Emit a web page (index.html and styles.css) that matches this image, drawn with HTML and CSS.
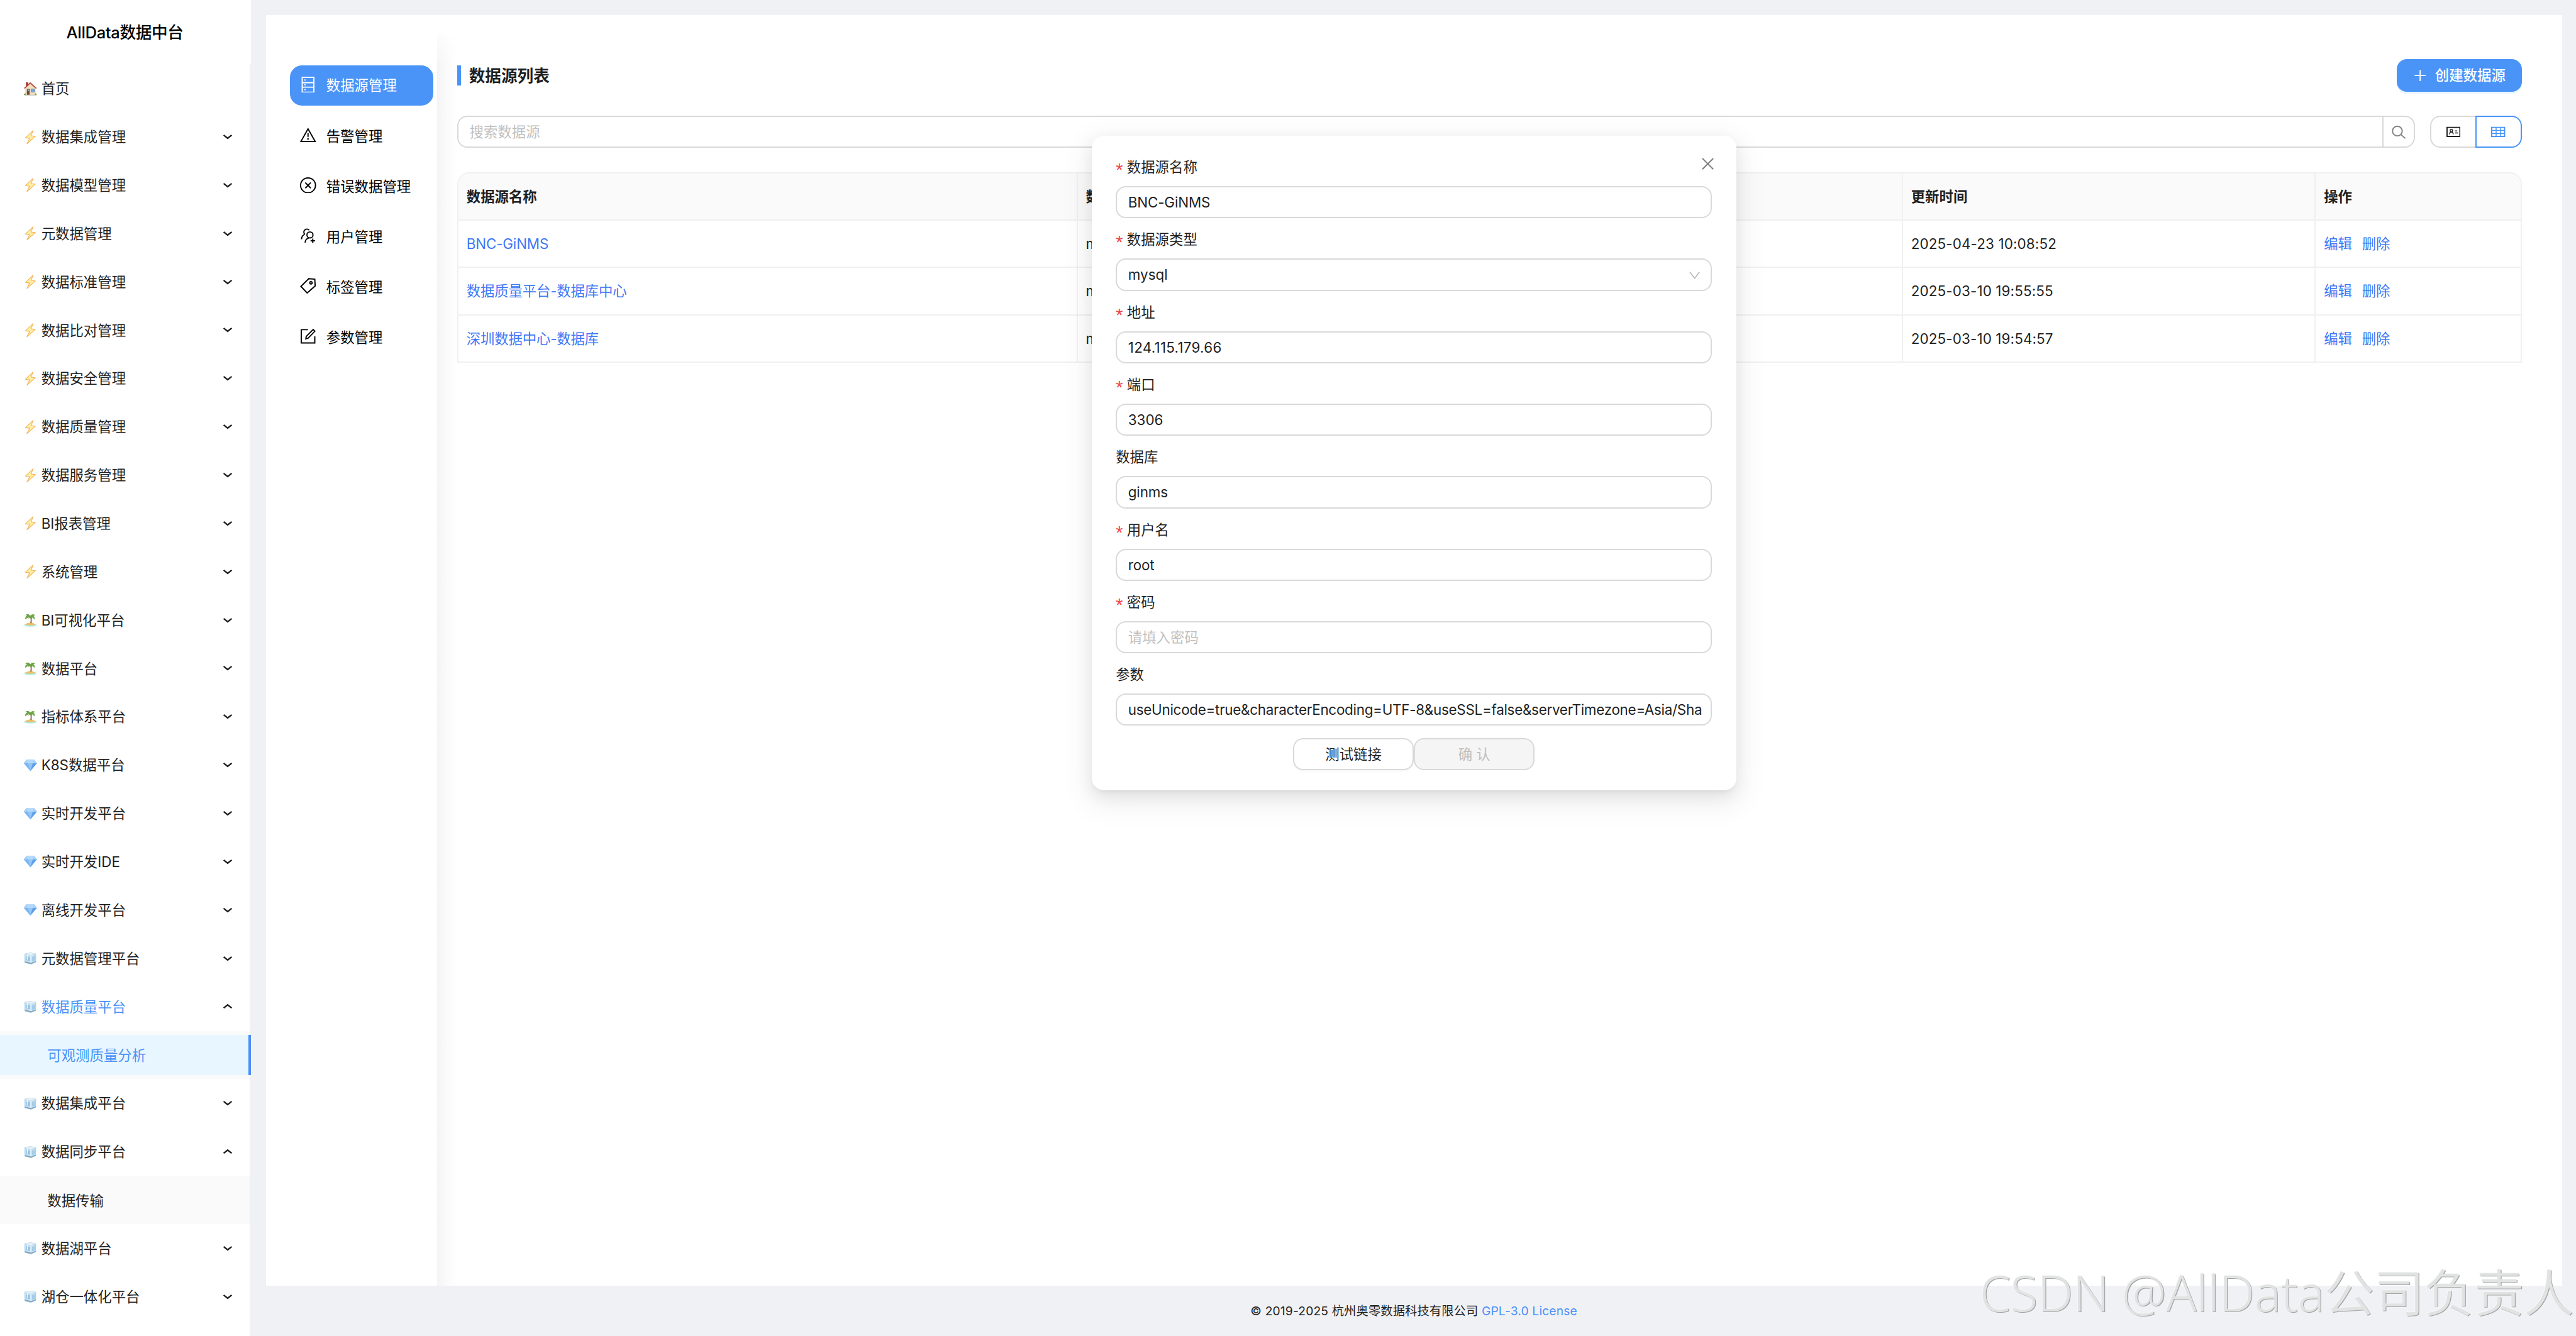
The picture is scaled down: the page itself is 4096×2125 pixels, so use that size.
FILE: index.html
```html
<!DOCTYPE html>
<html lang="zh-CN">
<head>
<meta charset="utf-8">
<title>AllData数据中台</title>
<link rel="stylesheet" href="styles.css">
</head>
<body>
<svg class="defs" width="0" height="0" aria-hidden="true">
  <symbol id="house" viewBox="0 0 14 14">
    <rect x="2.6" y=".6" width="2.4" height="4" fill="#9c4038"/>
    <path d="M7 1.6 12.2 6.6V13H1.8V6.6Z" fill="#f0dfc2"/>
    <path d="M7 .5 13.3 6.3 12.6 7 7 2.1 1.4 7 .7 6.3Z" fill="#b9453b"/>
    <rect x="3.6" y="7.2" width="2.7" height="5.8" fill="#6e4636"/><rect x="4.3" y="7.8" width="1.3" height="1.6" fill="#8db8df"/>
    <rect x="7.8" y="7.2" width="3.6" height="3" fill="#6fa9dc" stroke="#8d7561" stroke-width=".4"/>
    <path d="M.6 13.2q0-1.8 1.8-1.6v1.8ZM13.4 13.2q0-1.8-1.8-1.6v1.8Z" fill="#7da04f"/>
    <rect x="2" y="13" width="10" height=".5" fill="#a99a86"/>
  </symbol>
  <symbol id="bolt" viewBox="0 0 14 14">
    <path d="M9.8.4 2.2 7.6 6.4 8.2 3.6 13.6 12 6.2 7.7 5.6Z" fill="#fdf0a0" stroke="#f5b35c" stroke-width=".7" stroke-linejoin="round"/>
  </symbol>
  <symbol id="island" viewBox="0 0 14 14">
    <ellipse cx="7" cy="11.9" rx="6.2" ry="1.7" fill="#a5eee6"/>
    <path d="M1.6 11.4Q7 7.6 12.4 11.4 7 13.4 1.6 11.4Z" fill="#f2bf6b"/>
    <path d="M6.5 3.5Q7.8 6 7 10.2H8.3Q8.7 6 7.6 3.5Z" fill="#85603c"/>
    <path d="M7 2.6Q4-.4 2 2.4 3.8 2.2 4 2.8 1.6 3.4 2 6.4 4 4.6 5.6 4.4L5 6 7 4.4 9 6.2 8.6 4.3Q10 4.6 11 6.6 12 3.7 10 2.9 11 2.4 11.8 2.6 10-.2 7 2.6Z" fill="#6ba544"/>
  </symbol>
  <symbol id="gem" viewBox="0 0 14 14">
    <path d="M3 1.6H11L13.5 5 7 12.8.5 5Z" fill="#78b5f3"/>
    <path d="M3 1.6 4.5 5H.5ZM11 1.6 9.5 5h4Z" fill="#a9d2f8"/>
    <path d="M3 1.6H11L9.5 5H4.5Z" fill="#b5d9fa"/>
    <path d="M4.5 5h5L7 12.8Z" fill="#91c6f7"/><path d="M7 12.8 9.5 5h4Z" fill="#5f9fe8"/>
  </symbol>
  <symbol id="ice" viewBox="0 0 14 14">
    <path d="M1.6 2.6 7 1.6 12.4 2.6V10.8L7.6 12.8 1.6 11.2Z" fill="#c3deef" stroke="#9dc3da" stroke-width=".5"/>
    <path d="M1.6 2.6 7.6 4 12.4 2.6 7 1.6Z" fill="#e4f1f8"/>
    <path d="M2.6 5 6.6 5.8V9.6L2.6 8.8Z" fill="#94c1e3"/><path d="M8.6 5.8 11.6 5V9.2L8.6 10.2Z" fill="#a4cbe7"/>
    <path d="M4 3.4V8.6M7.6 4V12.8" stroke="#eef8fd" stroke-width=".8"/>
    <path d="M1.6 10 7.6 11.6 12.4 9.8V10.8L7.6 12.8 1.6 11.2Z" fill="#7da6bf"/>
  </symbol>
  <symbol id="down" viewBox="0 0 10 6"><path d="M1 1.2 5 4.4 9 1.2" fill="none" stroke="#1f1f1f" stroke-width="1.5"/></symbol>
  <symbol id="up" viewBox="0 0 10 6"><path d="M1 4.6 5 1.4 9 4.6" fill="none" stroke="#1f1f1f" stroke-width="1.5"/></symbol>
</svg>

<div class="app">
  <aside class="sider">
    <h1 class="brand">AllData数据中台</h1>
    <nav class="menu">
      <a class="item"><svg class="emoji"><use href="#house"/></svg><span>首页</span></a>
      <a class="item"><svg class="emoji"><use href="#bolt"/></svg><span>数据集成管理</span><svg class="arrow"><use href="#down"/></svg></a>
      <a class="item"><svg class="emoji"><use href="#bolt"/></svg><span>数据模型管理</span><svg class="arrow"><use href="#down"/></svg></a>
      <a class="item"><svg class="emoji"><use href="#bolt"/></svg><span>元数据管理</span><svg class="arrow"><use href="#down"/></svg></a>
      <a class="item"><svg class="emoji"><use href="#bolt"/></svg><span>数据标准管理</span><svg class="arrow"><use href="#down"/></svg></a>
      <a class="item"><svg class="emoji"><use href="#bolt"/></svg><span>数据比对管理</span><svg class="arrow"><use href="#down"/></svg></a>
      <a class="item"><svg class="emoji"><use href="#bolt"/></svg><span>数据安全管理</span><svg class="arrow"><use href="#down"/></svg></a>
      <a class="item"><svg class="emoji"><use href="#bolt"/></svg><span>数据质量管理</span><svg class="arrow"><use href="#down"/></svg></a>
      <a class="item"><svg class="emoji"><use href="#bolt"/></svg><span>数据服务管理</span><svg class="arrow"><use href="#down"/></svg></a>
      <a class="item"><svg class="emoji"><use href="#bolt"/></svg><span>BI报表管理</span><svg class="arrow"><use href="#down"/></svg></a>
      <a class="item"><svg class="emoji"><use href="#bolt"/></svg><span>系统管理</span><svg class="arrow"><use href="#down"/></svg></a>
      <a class="item"><svg class="emoji"><use href="#island"/></svg><span>BI可视化平台</span><svg class="arrow"><use href="#down"/></svg></a>
      <a class="item"><svg class="emoji"><use href="#island"/></svg><span>数据平台</span><svg class="arrow"><use href="#down"/></svg></a>
      <a class="item"><svg class="emoji"><use href="#island"/></svg><span>指标体系平台</span><svg class="arrow"><use href="#down"/></svg></a>
      <a class="item"><svg class="emoji"><use href="#gem"/></svg><span>K8S数据平台</span><svg class="arrow"><use href="#down"/></svg></a>
      <a class="item"><svg class="emoji"><use href="#gem"/></svg><span>实时开发平台</span><svg class="arrow"><use href="#down"/></svg></a>
      <a class="item"><svg class="emoji"><use href="#gem"/></svg><span>实时开发IDE</span><svg class="arrow"><use href="#down"/></svg></a>
      <a class="item"><svg class="emoji"><use href="#gem"/></svg><span>离线开发平台</span><svg class="arrow"><use href="#down"/></svg></a>
      <a class="item"><svg class="emoji"><use href="#ice"/></svg><span>元数据管理平台</span><svg class="arrow"><use href="#down"/></svg></a>
      <a class="item open"><svg class="emoji"><use href="#ice"/></svg><span>数据质量平台</span><svg class="arrow"><use href="#up"/></svg></a>
      <div class="sub"><a class="subitem selected">可观测质量分析</a></div>
      <a class="item"><svg class="emoji"><use href="#ice"/></svg><span>数据集成平台</span><svg class="arrow"><use href="#down"/></svg></a>
      <a class="item"><svg class="emoji"><use href="#ice"/></svg><span>数据同步平台</span><svg class="arrow"><use href="#up"/></svg></a>
      <div class="sub"><a class="subitem">数据传输</a></div>
      <a class="item"><svg class="emoji"><use href="#ice"/></svg><span>数据湖平台</span><svg class="arrow"><use href="#down"/></svg></a>
      <a class="item"><svg class="emoji"><use href="#ice"/></svg><span>湖仓一体化平台</span><svg class="arrow"><use href="#down"/></svg></a>
    </nav>
  </aside>

  <div class="main">
    <div class="panel">
      <nav class="tabs">
        <a class="tab active"><svg class="ico" viewBox="0 0 16 16"><path d="M2.2.6H13.8V15.4H2.2ZM2.2 5.9H13.8M2.2 10.4H13.8"/><path class="dot" d="M4.4 2.7h1.2v1.2H4.4ZM4.4 7.4h1.2v1.2H4.4ZM4.4 12.2h1.2v1.2H4.4Z"/></svg>数据源管理</a>
        <a class="tab"><svg class="ico" viewBox="0 0 16 16"><path d="M8 1.9 15.1 14.4H.9ZM8 6.2V9.8"/><circle class="dot" cx="8" cy="11.8" r=".8"/></svg>告警管理</a>
        <a class="tab"><svg class="ico" viewBox="0 0 16 16"><circle cx="8" cy="8" r="7.4"/><path d="M5.3 5.2 10.7 10.8M10.7 5.2 5.3 10.8"/></svg>错误数据管理</a>
        <a class="tab"><svg class="ico" viewBox="0 0 16 16"><circle cx="9.9" cy="7.3" r="3"/><path d="M9.2 2.6A3 3 0 1 0 4.5 6.4M4.8 6.6C2.8 7.4 1.6 9.2 1.5 11.6M8.6 10.4C6.5 11 5.2 12.6 5.1 14.9M12.7 10.9V15.3M10.5 13.1H14.9"/></svg>用户管理</a>
        <a class="tab"><svg class="ico" viewBox="0 0 16 16"><path d="M8.7.8 14.7 1.3 15.1 8 7.1 15 .9 8.4Z"/><circle cx="10.9" cy="4.9" r="1.2"/></svg>标签管理</a>
        <a class="tab"><svg class="ico" viewBox="0 0 16 16"><path d="M8 1.5H1.3V14.7H14.7V8.2M5.8 10.5 6.2 8.2 13.1 1.3 14.8 3 8 9.9Z"/></svg>参数管理</a>
      </nav>
      <div class="rail"></div>
      <section class="content">
        <header class="head">
          <h2>数据源列表</h2>
          <button class="create"><svg viewBox="0 0 14 14"><path d="M7 1.5V12.5M1.5 7H12.5"/></svg>创建数据源</button>
        </header>
        <div class="tools">
          <div class="search"><span>搜索数据源</span><i><svg viewBox="0 0 14 14"><circle cx="5.6" cy="5.9" r="4.8"/><path d="M9 9.3 13.5 13.2"/></svg></i></div>
          <div class="toggle">
            <i class="card"><svg viewBox="0 0 14 11"><path stroke-width="1.2" d="M.6 1H13.4V10H.6Z"/><circle cx="4.9" cy="4.2" r="1.2"/><path d="M3.1 7.9Q3.1 5.6 4.9 5.6 6.7 5.6 6.7 7.9M8.5 4.5H10.6M8.5 6.5H11.5"/></svg></i>
            <i class="grid"><svg viewBox="0 0 14 11"><path stroke-width="1.2" d="M.6 1H13.4V10H.6Z"/><path d="M.5 4H13.5M.5 7H13.5M5 1V10M9.2 1V10"/></svg></i>
          </div>
        </div>
        <div class="table">
          <div class="row th"><div>数据源名称</div><div>数据源类型</div><div></div><div>更新时间</div><div>操作</div></div>
          <div class="row"><div><a>BNC-GiNMS</a></div><div>mysql</div><div></div><div class="num">2025-04-23 10:08:52</div><div><a>编辑</a><a>删除</a></div></div>
          <div class="row"><div><a>数据质量平台-数据库中心</a></div><div>mysql</div><div></div><div class="num">2025-03-10 19:55:55</div><div><a>编辑</a><a>删除</a></div></div>
          <div class="row"><div><a>深圳数据中心-数据库</a></div><div>mysql</div><div></div><div class="num">2025-03-10 19:54:57</div><div><a>编辑</a><a>删除</a></div></div>
        </div>
      </section>
    </div>
    <footer class="foot">© 2019-2025 杭州奥零数据科技有限公司 <a>GPL-3.0 License</a></footer>
  </div>

  <div class="modal">
    <svg class="close" viewBox="0 0 12 12"><path d="M.6.6 11.4 11.4M11.4.6.6 11.4"/></svg>
    <div class="field req"><label>数据源名称</label><div class="input name">BNC-GiNMS</div></div>
    <div class="field req"><label>数据源类型</label><div class="input select">mysql<svg viewBox="0 0 12 12"><path d="M1.2 2.8 6 9.2 10.8 2.8"/></svg></div></div>
    <div class="field req"><label>地址</label><div class="input ip">124.115.179.66</div></div>
    <div class="field req"><label>端口</label><div class="input">3306</div></div>
    <div class="field"><label>数据库</label><div class="input name">ginms</div></div>
    <div class="field req"><label>用户名</label><div class="input name">root</div></div>
    <div class="field req"><label>密码</label><div class="input hint">请填入密码</div></div>
    <div class="field"><label>参数</label><div class="input long">useUnicode=true&amp;characterEncoding=UTF-8&amp;useSSL=false&amp;serverTimezone=Asia/Sha</div></div>
    <div class="actions"><button>测试链接</button><button class="off">确 认</button></div>
  </div>

  <div class="mark"><span>CSDN @AllData</span>公司负责人</div>
</div>
</body>
</html>
```
FILE: styles.css
```css
* { box-sizing: border-box; }
html { background: #f0f1f5; overflow: hidden; }
body {
  margin: 0;
  zoom: 1.60125;
  font: 14px/22px Inter, "Noto Sans CJK SC", sans-serif;
  color: #1f1f1f;
}
.defs { position: absolute; }
.app { position: relative; display: flex; width: 2558px; height: 1327px; overflow: hidden; background: #f0f1f5; }

/* left navigation */
.sider { width: 249px; flex: none; display: flex; flex-direction: column; }
.brand { margin: 0; height: 64px; background: #fff; font-size: 16px; font-weight: 500; line-height: 65px; letter-spacing: -.22px; text-align: center; color: #000; padding-right: 1px; }
.menu { flex: 1; background: #fff; border-right: 1.25px solid #eff0f0; }
.item { display: flex; align-items: center; height: 48px; padding: 0 16.4px 0 23px; }
.item span { flex: 1; margin-left: 4px; }
.emoji { width: 14px; height: 14px; flex: none; }
.arrow { width: 10px; height: 6px; flex: none; }
.open span { color: #4a93f8; }
.sub { background: #fafafa; padding: 4px 0; height: 48px; }
.subitem { display: block; height: 40px; line-height: 40.6px; padding-left: 47px; }
.selected { background: #e8f6ff; color: #4a93f8; border-right: 3px solid #4a8ff7; margin-right: -1.25px; position: relative; }

/* page panel */
.main { flex: 1; display: flex; flex-direction: column; padding: 15px 14px 0 15px; }
.panel { flex: 1; display: flex; background: #fff; padding: 20px 0 0 24px; }
.tabs { width: 146px; padding-top: 30px; display: flex; flex-direction: column; gap: 10px; }
.tab { display: flex; align-items: center; gap: 10px; width: 142px; height: 40px; padding-left: 10px; border-radius: 12px; color: #000; white-space: nowrap; }
.tab.active { background: #4a94f8; color: #fff; }
.ico { width: 16px; height: 16px; margin-top: -2px; fill: none; stroke: currentColor; stroke-width: 1.2; }
.ico .dot { fill: currentColor; stroke: none; }
.rail { width: 20px; background: linear-gradient(to right, #f4f4f4, #fafafa 45%, #fff); mask-image: linear-gradient(rgba(0,0,0,.3), #000 30px); }
.content { width: 2050px; padding-top: 24px; }

.head { display: flex; justify-content: space-between; height: 32px; }
h2 { margin: 6px 0 0; height: 20px; border-left: 4px solid #4a94f8; padding-left: 8px; font-size: 16px; font-weight: 600; line-height: 21.5px; }
.create { display: flex; align-items: center; gap: 8px; width: 124px; height: 32px; padding: 0 14px 0 16px; border: 0; border-radius: 10px; background: #4a94f8; color: #fff; font: inherit; font-weight: 500; white-space: nowrap; box-shadow: 0 2px 0 #e9f6ff; }
.create svg { width: 14px; height: 14px; fill: none; stroke: #fff; stroke-width: 1.15; }

.tools { display: flex; gap: 15px; margin-top: 24px; height: 32px; }
.search { flex: 1; display: flex; align-items: center; justify-content: space-between; border: 1.25px solid #d9d9d9; border-radius: 10px; padding-left: 11px; color: #bfbfbf; }
.search i { width: 31px; height: 100%; display: grid; place-items: center; border-left: 1.25px solid #d9d9d9; }
.search svg { width: 14px; height: 14px; fill: none; stroke: #808080; stroke-width: 1.2; }
.toggle { display: flex; width: 91px; }
.toggle i { display: grid; place-items: center; flex: 1; border: 1.25px solid #d9d9d9; }
.toggle .card { border-right: 0; border-radius: 10px 0 0 10px; }
.toggle .grid { border-color: #4a94f8; border-radius: 0 10px 10px 0; color: #4a94f8; }
.toggle svg { width: 14px; height: 11px; fill: none; stroke: currentColor; stroke-width: .9; }

.table { margin-top: 24px; border: 1.25px solid #f0f0f0; border-bottom: 0; border-radius: 12px 12px 0 0; overflow: hidden; }
.row { display: grid; grid-template-columns: 615px 410px 409.5px 410px 1fr; height: 47px; border-bottom: 1.25px solid #f0f0f0; }
.row > div { display: flex; align-items: center; gap: 10px; padding: 0 8px; border-right: 1.25px solid #f0f0f0; }
.row > div:last-child { border-right: 0; }
.row a { color: #3f77f6; }
.row .num { letter-spacing: .08px; }
.th { background: #fafafa; font-weight: 600; }

.foot { height: 50px; font-size: 12px; line-height: 50px; letter-spacing: .11px; text-align: center; white-space: pre; }
.foot a { color: #4a90f7; }

/* edit dialog */
.modal { position: absolute; left: 1084px; top: 135px; width: 640px; height: 650px; padding: 20px 24px; border-radius: 12px; background: #fff; box-shadow: 0 6px 16px rgba(0,0,0,.08), 0 3px 6px -4px rgba(0,0,0,.12), 0 9px 28px 8px rgba(0,0,0,.05); }
.close { position: absolute; right: 22px; top: 22px; width: 12px; height: 12px; fill: none; stroke: #7c7c7c; stroke-width: 1.2; }
.field { height: 72px; }
.field label { display: flex; height: 30px; }
.req label::before { content: "*"; width: 11px; color: #f04848; font: 18px/28px "Liberation Sans", sans-serif; }
.input { display: flex; align-items: center; justify-content: space-between; height: 32px; padding: 0 11px; border: 1.25px solid #d9d9d9; border-radius: 10px; white-space: nowrap; overflow: hidden; }
.input svg { width: 12px; height: 12px; margin-right: -1px; fill: none; stroke: #b5b5b5; }
.name, .row a { letter-spacing: -.1px; }
.ip { letter-spacing: .17px; }
.long { letter-spacing: -.17px; }
.hint { color: #bfbfbf; }
.actions { display: flex; justify-content: center; margin-top: 2px; }
.actions button { width: 120px; height: 32px; border: 1.25px solid #d9d9d9; border-radius: 10px; background: #fff; font: inherit; color: #1f1f1f; box-shadow: 0 2px 0 #fafafa; }
.actions .off { background: #f5f5f5; color: #bfbfbf; box-shadow: none; }

/* overlay watermark */
.mark { position: absolute; right: 2px; bottom: 7.5px; display: flex; align-items: baseline; font: 49.6px/72px "Noto Sans CJK SC", sans-serif; font-weight: 350; color: #e1e3e2; text-shadow: .8px .8px .4px #a3a4a6, -.5px -.5px .3px #f8f8f8; white-space: pre; }
.mark span { font-family: "Noto Sans", sans-serif; letter-spacing: -.2px; }
```
